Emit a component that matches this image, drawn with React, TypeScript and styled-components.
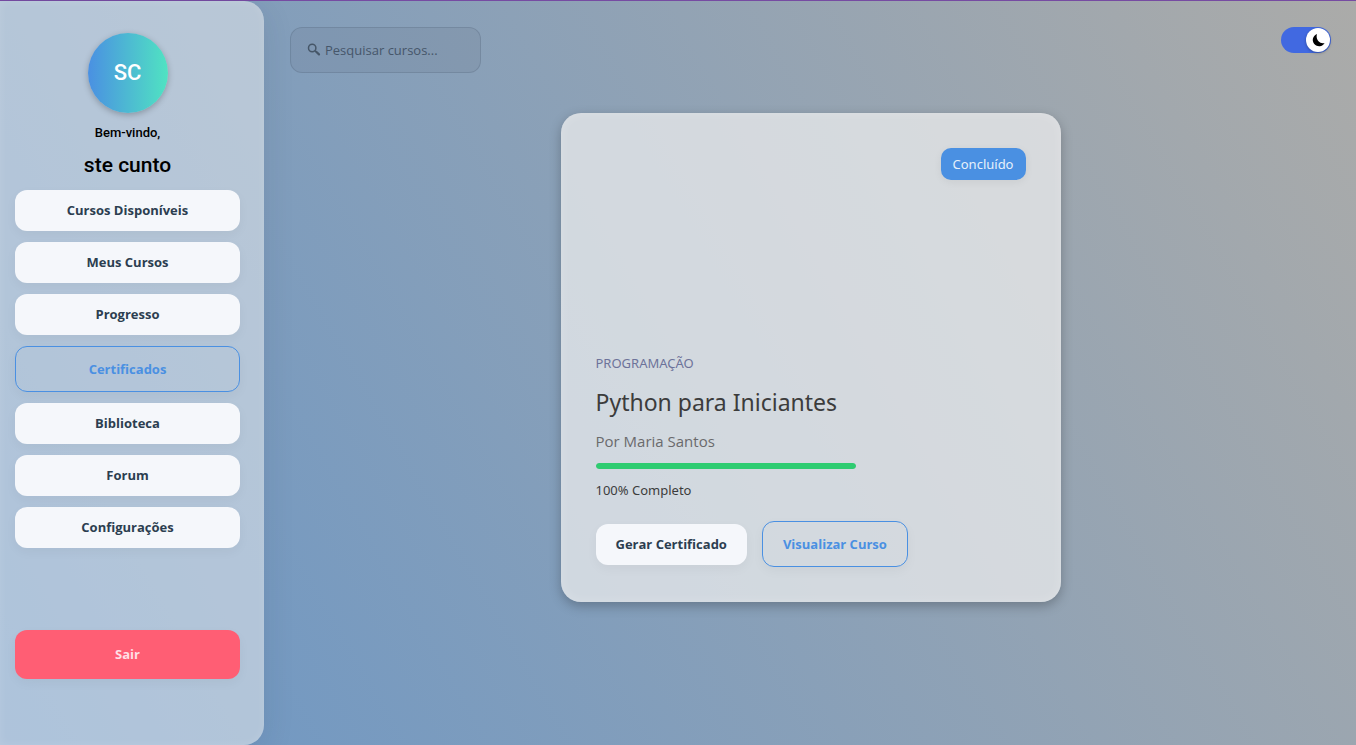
import React, { useState } from 'react';
import styled, { createGlobalStyle, css } from 'styled-components';

const GlobalStyle = createGlobalStyle`
  * { box-sizing: border-box; }
  html { background: #a9abac; }
  body {
    margin: 0;
    font-family: "Noto Sans", "Open Sans", sans-serif;
    font-size: 13px;
    line-height: 20px;
    color: #3c3c3c;
  }
  h1, h2, p { margin: 0; font-weight: 400; }
  button, input { font: inherit; }
`;

const Page = styled.div`
  display: flex;
  min-height: 100vh;
  border-top: 1px solid #764ba2;
  background: linear-gradient(60deg, #6a96c6, #ababa9) padding-box;
`;

const Sidebar = styled.aside`
  flex: 0 0 264px;
  display: flex;
  flex-direction: column;
  align-items: center;
  padding: 32px 24px 32px 15px;
  border-radius: 0 20px 20px 0;
  background: rgba(230, 234, 236, 0.55);
  box-shadow: 0 8px 32px rgba(31, 38, 60, 0.1), inset 0 0 10px rgba(255, 255, 255, 0.12);
`;

const Avatar = styled.div`
  display: grid;
  place-items: center;
  width: 80px;
  height: 80px;
  border-radius: 50%;
  background: linear-gradient(90deg, #4a90e2, #50e3c2);
  box-shadow: 0 2px 6px rgba(0, 0, 0, 0.25);
  color: #fff;
  font: 500 22px/28px Roboto, sans-serif;
`;

const Welcome = styled.p`
  margin-top: 10px;
  color: #000;
  font: 500 13px/20px Roboto, sans-serif;
`;

const UserName = styled.h2`
  margin: 9px 0 12px;
  color: #000;
  font: 500 21px/26px Roboto, sans-serif;
`;

const Nav = styled.nav`
  display: flex;
  flex-direction: column;
  gap: 11px;
  width: 100%;
`;

const Button = styled.button<{ $variant?: 'outline' | 'danger' }>`
  padding: 10px 20px;
  border: 0;
  border-radius: 12px;
  background: #f5f7fb;
  color: #2c3e50;
  font-family: "Open Sans", "Noto Sans", sans-serif;
  font-weight: 700;
  line-height: 21px;
  cursor: pointer;
  box-shadow: 0 4px 12px rgba(0, 0, 0, 0.04);
  ${({ $variant }) => $variant === 'outline' && css`
    padding: 12px 20px;
    border: 1px solid #4a90e2;
    background: transparent;
    color: #4a90e2;
    line-height: 20px;
  `}
  ${({ $variant }) => $variant === 'danger' && css`
    width: 100%;
    padding: 14px 20px;
    background: #ff5e74;
    color: #ffdfe5;
  `}
`;

const Logout = styled.div`
  width: 100%;
  margin-top: 82px;
`;

const Main = styled.main`
  flex: 1;
  display: flex;
  flex-direction: column;
  padding: 26px 25px 26px 26px;
`;

const TopBar = styled.header`
  display: flex;
  justify-content: space-between;
  align-items: flex-start;
`;

const Search = styled.label`
  display: flex;
  align-items: center;
  gap: 4px;
  width: 191px;
  height: 46px;
  padding: 0 16px;
  border: 1px solid rgba(60, 75, 95, 0.2);
  border-radius: 12px;
  background: rgba(90, 100, 115, 0.12);
  color: #465668;
  font-family: "Open Sans", "Noto Sans", sans-serif;

  input {
    flex: 1;
    min-width: 0;
    padding: 0;
    border: 0;
    outline: 0;
    background: transparent;
    color: inherit;
  }
  input::placeholder { color: #46566a; opacity: 1; }
`;

const Toggle = styled.label`
  position: relative;
  display: flex;
  justify-content: flex-end;
  width: 50px;
  height: 26px;
  border-radius: 13px;
  background: #4169e1;
  cursor: pointer;

  input {
    position: absolute;
    inset: 0;
    width: 100%;
    height: 100%;
    margin: 0;
    opacity: 0;
    cursor: pointer;
  }
`;

const Knob = styled.span`
  display: grid;
  place-items: center;
  width: 24px;
  height: 24px;
  margin: 1px;
  border-radius: 50%;
  background: #fff;
  box-shadow: 0 1px 3px rgba(0, 0, 0, 0.3);
`;

const Card = styled.article`
  display: flex;
  flex-direction: column;
  align-items: flex-start;
  width: 100%;
  max-width: 500px;
  margin: 40px auto 0;
  padding: 35px;
  border-radius: 20px;
  background: rgba(239, 239, 239, 0.72);
  box-shadow: 0 4px 12px rgba(0, 0, 0, 0.25), inset 0 0 12px rgba(255, 255, 255, 0.2);
`;

const Badge = styled.span`
  align-self: flex-end;
  padding: 6px 12px;
  border-radius: 10px;
  background: #4a90e2;
  color: #e6f0fb;
  box-shadow: 0 2px 8px rgba(0, 0, 0, 0.06);
`;

const Category = styled.p`
  margin-top: 173px;
  color: #6d739a;
`;

const Title = styled.h1`
  margin-top: 12px;
  color: #3c3c3c;
  font-size: 23px;
  line-height: 34px;
`;

const Author = styled.p`
  margin-top: 12px;
  color: #6a6a6c;
  font: 15px/20px "Open Sans", "Noto Sans", sans-serif;
`;

const Progress = styled.div`
  width: 260px;
  height: 6px;
  margin: 12px 0 11px;
  border-radius: 3px;
  background: rgba(0, 0, 0, 0.08);
  overflow: hidden;
`;

const ProgressFill = styled.div`
  height: 100%;
  border-radius: 3px;
  background: #2ecc71;
`;

const Actions = styled.div`
  display: flex;
  align-items: center;
  gap: 15px;
  margin-top: 21px;
`;

const SearchIcon = () => (
  <svg width="14" height="14" viewBox="0 0 14 14" fill="none" stroke="currentColor" aria-hidden="true">
    <circle cx="5.2" cy="5" r="3.7" strokeWidth="1.5" />
    <path d="M8 7.7 9.2 8.8" strokeWidth="1.5" />
    <path d="M9.2 8.8 12 11.4" strokeWidth="2.2" strokeLinecap="round" />
  </svg>
);

const MoonIcon = () => (
  <svg width="14" height="14" viewBox="0 0 14 14" fill="#000" aria-hidden="true">
    <path d="M6 1A6.3 6.3 0 1 0 13.6 10C9.2 11.6 4.2 6.6 6 1Z" />
  </svg>
);

const sections = [
  'Cursos Disponíveis',
  'Meus Cursos',
  'Progresso',
  'Certificados',
  'Biblioteca',
  'Forum',
  'Configurações',
];

export default function App() {
  const [active, setActive] = useState('Certificados');
  const progress = 100;

  return (
    <>
      <GlobalStyle />
      <Page>
        <Sidebar>
          <Avatar>SC</Avatar>
          <Welcome>Bem-vindo,</Welcome>
          <UserName>ste cunto</UserName>
          <Nav>
            {sections.map((name) => (
              <Button
                key={name}
                type="button"
                $variant={name === active ? 'outline' : undefined}
                onClick={() => setActive(name)}
              >
                {name}
              </Button>
            ))}
          </Nav>
          <Logout>
            <Button type="button" $variant="danger">Sair</Button>
          </Logout>
        </Sidebar>
        <Main>
          <TopBar>
            <Search>
              <SearchIcon />
              <input type="text" placeholder="Pesquisar cursos..." aria-label="Pesquisar cursos" />
            </Search>
            <Toggle>
              <input type="checkbox" defaultChecked aria-label="Modo escuro" />
              <Knob><MoonIcon /></Knob>
            </Toggle>
          </TopBar>
          <Card>
            <Badge>Concluído</Badge>
            <Category>PROGRAMAÇÃO</Category>
            <Title>Python para Iniciantes</Title>
            <Author>Por Maria Santos</Author>
            <Progress>
              <ProgressFill style={{ width: `${progress}%` }} />
            </Progress>
            <p>{progress}% Completo</p>
            <Actions>
              <Button type="button">Gerar Certificado</Button>
              <Button type="button" $variant="outline">Visualizar Curso</Button>
            </Actions>
          </Card>
        </Main>
      </Page>
    </>
  );
}
